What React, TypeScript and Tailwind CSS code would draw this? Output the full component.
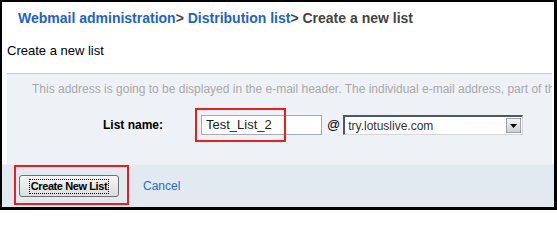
export default function App() {
  return (
    <div className="relative w-[557px] h-[210px] overflow-hidden bg-black pt-[2px] pl-[2px] pr-[3px] pb-[3px] font-['Liberation_Sans',Arial,sans-serif]">
      <div className="flex flex-col w-full h-full bg-white">
        {/* breadcrumb */}
        <div className="h-[32px] pt-[8px] pl-[16px] text-[14px] font-bold leading-[17px]">
          <span className="text-[#1d62d4]">Webmail administration</span>
          <span className="text-[#444]">&gt; </span>
          <span className="text-[#1d62d4]">Distribution list</span>
          <span className="text-[#444]">&gt; Create a new list</span>
        </div>

        <div className="h-[39px] pt-[9px] pl-[5px] text-[13px] leading-[16px] text-black">
          Create a new list
        </div>

        {/* form panel */}
        <div className="ml-[5px] mr-[2px] h-[91px] border-t border-[#c6c9cc] bg-[#eef1f5] overflow-hidden">
          <div className="pt-[8px] pl-[25px] text-[12px] leading-[14px] text-[#a9a9a9] whitespace-nowrap">
            This address is going to be displayed in the e-mail header. The individual e-mail address, part of the
          </div>
          <div className="flex items-center mt-[19px] pl-[96px]">
            <span className="w-[98px] text-[12px] font-bold text-black">List name:</span>
            <div className="w-[121px] h-[20px] border border-[#a5acb5] bg-white pl-[4px] text-[13px] leading-[18px] text-[#222]">
              Test_List_2
            </div>
            <span className="ml-[5px] text-[13px] text-black">@</span>
            <div className="ml-[3px] flex items-center w-[180px] h-[20px] border-t-2 border-l-2 border-t-[#4b5866] border-l-[#4b5866] border-b border-r border-b-[#d4d8dc] border-r-[#d4d8dc] bg-white">
              <span className="flex-1 pl-[3px] text-[12px] leading-[16px] text-[#333]">try.lotuslive.com</span>
              <div className="flex items-center justify-center w-[15px] h-[15px] mr-[1px] border border-[#9ba3ab] bg-gradient-to-b from-[#f3f3f3] to-[#cfcfcf]">
                <svg width="7" height="4" viewBox="0 0 7 4">
                  <polygon points="0,0 7,0 3.5,4" fill="#000" />
                </svg>
              </div>
            </div>
          </div>
        </div>

        {/* footer */}
        <div className="flex flex-1 items-center border-t border-[#e8edf2] bg-[#e1e9f1] pl-[17px]">
          <button className="h-[22px] w-[100px] rounded-[3px] border border-[#707070] bg-gradient-to-b from-[#f6f6f6] to-[#dcdcdc] flex items-center justify-center">
            <span className="px-[1px] outline-1 outline-dotted outline-black text-[11px] font-bold leading-[13px] tracking-[-0.4px] text-black">
              Create New List
            </span>
          </button>
          <span className="ml-[24px] text-[12px] text-[#2b6bd0]">Cancel</span>
        </div>
      </div>

      {/* annotation boxes */}
      <div className="absolute left-[195px] top-[108px] w-[91px] h-[34px] border-2 border-[#f01c1c]" />
      <div className="absolute left-[14px] top-[165px] w-[115px] h-[40px] border-2 border-[#f01c1c]" />
    </div>
  )
}
